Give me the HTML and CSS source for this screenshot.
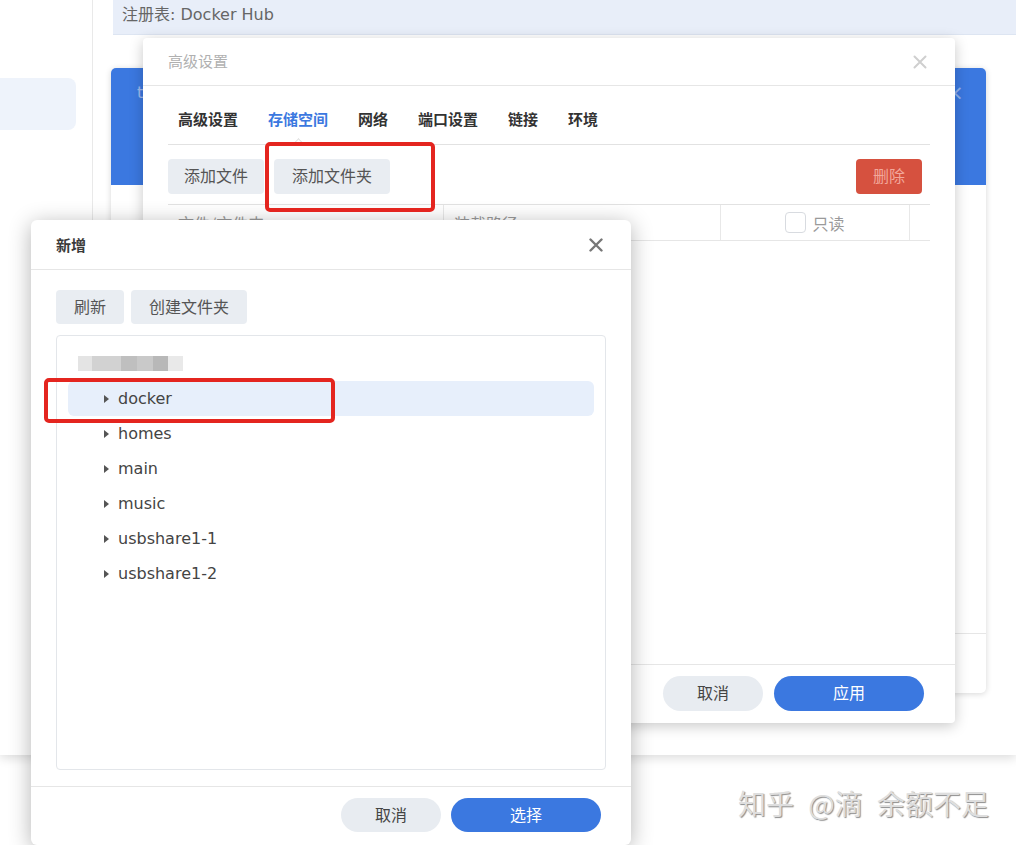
FILE: index.html
```html
<!DOCTYPE html>
<html lang="zh-CN">
<head>
<meta charset="utf-8">
<title>Docker 存储空间</title>
<link rel="stylesheet" href="styles.css">
</head>
<body>
<div class="main-window">
  <aside class="sidebar"><div class="side-item"></div></aside>
  <div class="content">
    <div class="registry">注册表: Docker Hub</div>
  </div>
</div>

<div class="win-blue">
  <div class="blue-head"><span class="blue-title">test</span><span class="blue-close">×</span></div>
  <div class="blue-body"></div>
  <div class="blue-foot"><span class="blue-btn"></span></div>
</div>

<div class="dlg dlg-adv">
  <div class="dlg-head adv-head">
    <span class="adv-title">高级设置</span>
    <svg class="close close-light" width="14" height="14" viewBox="0 0 14 14"><path d="M1.5 1.5L12.5 12.5M12.5 1.5L1.5 12.5"/></svg>
  </div>
  <div class="tabs">
    <span class="tab">高级设置</span>
    <span class="tab active">存储空间</span>
    <span class="tab">网络</span>
    <span class="tab">端口设置</span>
    <span class="tab">链接</span>
    <span class="tab">环境</span>
  </div>
  <div class="toolbar">
    <button class="btn btn-gray btn-a">添加文件</button>
    <button class="btn btn-gray btn-b">添加文件夹</button>
    <button class="btn btn-red">删除</button>
  </div>
  <div class="thead">
    <div class="th">文件/文件夹</div>
    <div class="th">装载路径</div>
    <div class="th th-center"><span class="checkbox"></span>只读</div>
    <div class="th"></div>
  </div>
  <div class="dlg-body"></div>
  <div class="dlg-foot adv-foot">
    <button class="pill pill-gray">取消</button>
    <button class="pill pill-blue">应用</button>
  </div>
</div>

<div class="dlg dlg-new">
  <div class="dlg-head new-head">
    <span class="new-title">新增</span>
    <svg class="close close-dark" width="14" height="14" viewBox="0 0 14 14"><path d="M1.5 1.5L12.5 12.5M12.5 1.5L1.5 12.5"/></svg>
  </div>
  <div class="new-toolbar">
    <button class="btn btn-gray btn-c">刷新</button>
    <button class="btn btn-gray btn-c">创建文件夹</button>
  </div>
  <div class="tree">
    <div class="row root"><span class="blur"></span></div>
    <div class="row child selected"><span class="caret"></span><span class="name">docker</span></div>
    <div class="row child"><span class="caret"></span><span class="name">homes</span></div>
    <div class="row child"><span class="caret"></span><span class="name">main</span></div>
    <div class="row child"><span class="caret"></span><span class="name">music</span></div>
    <div class="row child"><span class="caret"></span><span class="name">usbshare1-1</span></div>
    <div class="row child"><span class="caret"></span><span class="name">usbshare1-2</span></div>
  </div>
  <div class="dlg-foot new-foot">
    <button class="pill pill-gray pill-sm">取消</button>
    <button class="pill pill-blue pill-sm">选择</button>
  </div>
</div>

<div class="mark mark-1"></div>
<div class="mark mark-2"></div>

<div class="watermark">知乎 @滴 余额不足</div>
</body>
</html>
```

FILE: styles.css
```css
* { box-sizing: border-box; }

body {
  margin: 0;
  width: 1016px;
  height: 845px;
  overflow: hidden;
  position: relative;
  background: #fff;
  font-family: "DejaVu Sans", "Noto Sans CJK SC", sans-serif;
  font-size: 16px;
  color: #444;
}

button {
  font-family: "Noto Sans CJK SC", "DejaVu Sans", sans-serif;
  border: none;
  margin: 0;
  cursor: pointer;
}

/* background main window */
.main-window {
  position: absolute;
  left: 0;
  top: 0;
  width: 1016px;
  height: 755px;
  background: #fff;
  display: flex;
  box-shadow: 0 3px 10px rgba(0, 0, 0, 0.14);
}

.sidebar {
  width: 93px;
  border-right: 1px solid #e9e9e9;
  padding-top: 78px;
}

.side-item {
  width: 76px;
  height: 52px;
  background: #eef3fb;
  border-radius: 0 8px 8px 0;
}

.content {
  flex: 1;
  padding-left: 20px;
}

.registry {
  height: 35px;
  background: #e8eef9;
  border-bottom: 1px solid #dde5f2;
  padding: 3px 0 0 9px;
  line-height: 23px;
  color: #666;
}

/* blue window behind */
.win-blue {
  position: absolute;
  left: 111px;
  top: 68px;
  width: 875px;
  height: 625px;
  background: #fff;
  border-radius: 5px;
  box-shadow: 0 1px 6px rgba(0, 0, 0, 0.16);
  display: flex;
  flex-direction: column;
}

.blue-head {
  height: 117px;
  background: #3b78e0;
  border-radius: 5px 5px 0 0;
  display: flex;
  align-items: flex-start;
  padding: 13px 22px 0 26px;
}

.blue-title {
  line-height: 24px;
  color: rgba(255, 255, 255, 0.5);
  font-size: 16px;
}

.blue-close {
  margin-left: auto;
  line-height: 24px;
  font-size: 22px;
  color: rgba(255, 255, 255, 0.45);
}

.blue-body { flex: 1; }

.blue-foot {
  height: 60px;
  border-top: 1px solid #e6e6e6;
}

/* dialogs */
.dlg {
  position: absolute;
  background: #fff;
  display: flex;
  flex-direction: column;
}

.dlg-adv {
  left: 143px;
  top: 38px;
  width: 812px;
  height: 685px;
  border-radius: 4px;
  box-shadow: 0 3px 14px rgba(0, 0, 0, 0.22);
}

.dlg-head {
  display: flex;
  align-items: center;
  justify-content: space-between;
  border-bottom: 1px solid #e6e6e6;
  padding: 0 25px;
}

.adv-head { height: 48px; padding-right: 28px; }

.adv-title {
  font-family: "Noto Sans CJK SC", sans-serif;
  font-size: 15px;
  color: #b0b0b0;
  padding-bottom: 2px;
}

.close path {
  fill: none;
  stroke-linecap: round;
}

.close-light path { stroke: #cfcfcf; stroke-width: 2; }
.close-dark path { stroke: #777; stroke-width: 2.4; }

.tabs {
  position: relative;
  margin: 0 25px;
  padding: 22px 0 0 10px;
  border-bottom: 1px solid #e2e2e2;
  display: flex;
  gap: 30px;
}

.tab {
  position: relative;
  font-family: "Noto Sans CJK SC", sans-serif;
  font-size: 15px;
  font-weight: bold;
  line-height: 22px;
  padding-bottom: 14px;
  color: #333;
}

.tab.active { color: #3b78e0; }

.tab.active::after {
  content: "";
  position: absolute;
  left: calc(50% - 4px);
  bottom: -5px;
  width: 8px;
  height: 8px;
  background: #fff;
  border-top: 1px solid #e0e0e0;
  border-left: 1px solid #e0e0e0;
  transform: rotate(45deg);
}

.toolbar {
  margin: 0 25px;
  padding: 14px 8px 10px 0;
  border-bottom: 1px solid #e2e2e2;
  display: flex;
  gap: 10px;
}

.btn {
  height: 35px;
  padding: 0 17px 3px;
  font-size: 16px;
  border-radius: 4px;
}

.btn-gray {
  background: #e9edf2;
  color: #555;
}

.btn-a { padding: 0 16px 3px; }
.btn-b { padding: 0 18px 3px; }

.btn-red {
  margin-left: auto;
  background: #d6513f;
  color: #f2a89b;
}

.thead {
  margin: 0 25px;
  height: 36px;
  border-bottom: 1px solid #e6e6e6;
  display: grid;
  grid-template-columns: 275px 277px 189px 21px;
}

.th {
  font-family: "Noto Sans CJK SC", sans-serif;
  font-size: 16px;
  color: #9a9a9a;
  display: flex;
  align-items: center;
  padding-left: 10px;
}

.th + .th { border-left: 1px solid #e8e8e8; }

.th-center {
  justify-content: center;
  padding-left: 0;
}

.checkbox {
  width: 21px;
  height: 21px;
  border: 1px solid #d8dbe0;
  border-radius: 4px;
  margin-right: 6px;
  background: #fff;
}

.dlg-body { flex: 1; }

.dlg-foot {
  border-top: 1px solid #e6e6e6;
  display: flex;
  justify-content: flex-end;
  align-items: flex-start;
}

.adv-foot {
  height: 59px;
  padding: 11px 31px 0 0;
  gap: 11px;
}

.pill {
  height: 35px;
  width: 100px;
  padding: 0 0 3px;
  border-radius: 18px;
  font-size: 16px;
}

.pill-gray {
  background: #e8ecf1;
  color: #444;
}

.pill-blue {
  width: 150px;
  background: #3b78e0;
  color: #fff;
}

.pill-sm { height: 34px; }

/* 新增 dialog */
.dlg-new {
  left: 31px;
  top: 220px;
  width: 600px;
  height: 625px;
  border-radius: 6px;
  box-shadow: 0 4px 22px rgba(0, 0, 0, 0.3);
  z-index: 5;
}

.new-head { height: 50px; padding-right: 28px; }

.new-title {
  font-family: "Noto Sans CJK SC", sans-serif;
  font-size: 15px;
  font-weight: bold;
  color: #3a3a3a;
}

.new-toolbar {
  display: flex;
  gap: 7px;
  padding: 20px 25px 11px;
}

.btn-c {
  height: 34px;
  padding: 0 18px 3px;
}

.tree {
  margin: 0 25px 16px;
  height: 435px;
  border: 1px solid #e3e6ea;
  border-radius: 4px;
  padding: 10px 11px 0;
}

.row {
  height: 35px;
  display: flex;
  align-items: center;
  border-radius: 6px;
}

.root { padding-left: 10px; }

.blur {
  width: 105px;
  height: 15px;
  background: linear-gradient(to right,
    #e4e4e4 0, #e4e4e4 14px,
    #d2d2d2 14px, #d2d2d2 43px,
    #bfbfbf 43px, #bfbfbf 59px,
    #c9c9c9 59px, #c9c9c9 75px,
    #b8b8b8 75px, #b8b8b8 90px,
    #e9e9e9 90px, #e9e9e9 105px);
}

.child { padding-left: 36px; }

.selected { background: #e7effb; }

.caret {
  width: 0;
  height: 0;
  border-left: 5px solid #555;
  border-top: 4.5px solid transparent;
  border-bottom: 4.5px solid transparent;
  margin-right: 9px;
}

.name {
  font-size: 16px;
  color: #444;
  line-height: 20px;
}

.new-foot {
  flex: 1;
  padding: 11px 30px 0 0;
  gap: 10px;
}

/* annotation marks */
.mark {
  position: absolute;
  border: 4px solid #e4251f;
  border-radius: 5px;
  z-index: 10;
}

.mark-1 {
  left: 265px;
  top: 142px;
  width: 170px;
  height: 70px;
}

.mark-2 {
  left: 44px;
  top: 378px;
  width: 291px;
  height: 45px;
}

.watermark {
  position: absolute;
  left: 738px;
  top: 785px;
  font-family: "Noto Sans CJK SC", sans-serif;
  font-size: 28px;
  line-height: 36px;
  word-spacing: 8px;
  color: #dedede;
  text-shadow: 1px 1px 1px rgba(0, 0, 0, 0.45);
  white-space: nowrap;
  z-index: 11;
}
```
